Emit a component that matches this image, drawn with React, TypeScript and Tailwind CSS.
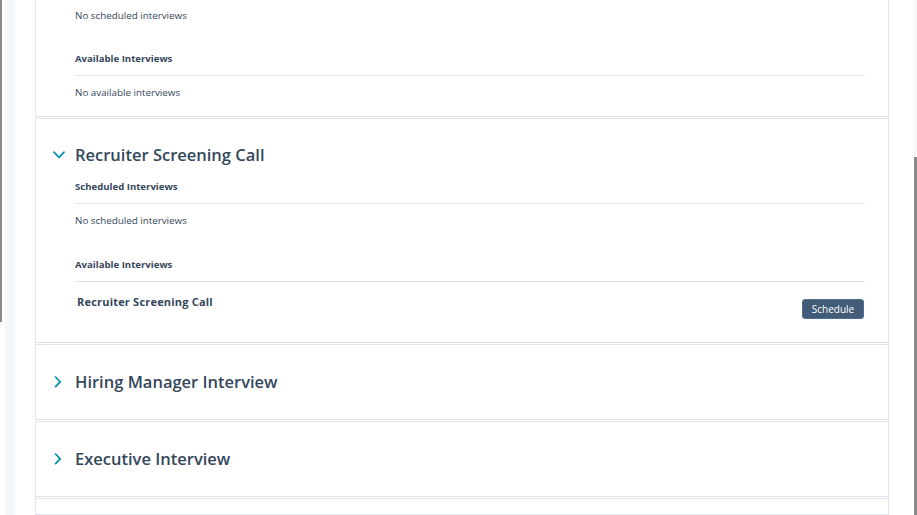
const FONT = "font-['Open_Sans','Lato',sans-serif]";

function Chevron({ open }: { open: boolean }) {
  return open ? (
    <svg width="12" height="8" viewBox="0 0 12 8" fill="none">
      <path d="M1 1.2 L6 6.3 L11 1.2" stroke="#0091ae" strokeWidth="1.7" strokeLinecap="round" strokeLinejoin="round" />
    </svg>
  ) : (
    <svg width="12" height="12" viewBox="0 0 12 12" fill="none">
      <path d="M2.6 1 L7.2 5.8 L2.6 10.6" stroke="#0091ae" strokeWidth="1.7" strokeLinecap="round" strokeLinejoin="round" />
    </svg>
  );
}

function SectionHeader({ label }: { label: string }) {
  return (
    <div className="border-b border-[#dfe3eb] pb-[9px] text-[9.6px] font-bold leading-[14px] text-[#33475b]">
      {label}
    </div>
  );
}

function EmptyText({ text, first = false }: { text: string; first?: boolean }) {
  return (
    <div className={`${first ? "pt-[11px]" : "pt-[10px]"} text-[9.8px] leading-[14px] text-[#33475b]`}>
      {text}
    </div>
  );
}

function CardTitle({ title, open }: { title: string; open: boolean }) {
  return (
    <div className="flex items-center gap-[10px] h-[24px] pl-[17px]">
      <Chevron open={open} />
      <h3 className="text-[16.5px] font-semibold text-[#33475b]">{title}</h3>
    </div>
  );
}

function CollapsedCard({ title }: { title: string }) {
  return (
    <div className="border border-[#dfe3eb] bg-white py-[25px]">
      <CardTitle title={title} open={false} />
    </div>
  );
}

export default function App() {
  return (
    <div className={`flex h-[515px] w-[917px] overflow-hidden bg-white ${FONT}`}>
      {/* left edge: neighbour scrollbar + sidebar strip */}
      <div className="flex flex-col w-[2px]">
        <div className="h-[322px] bg-[#8a8a8a]" />
      </div>
      <div className="w-[3px]" />
      <div className="w-[10px] bg-[#f5f8fa]" />

      <div className="flex-1 flex flex-col gap-[1px] pl-[20px] pr-[25px]">
        {/* first card, scrolled off the top */}
        <div className="-mt-[2px] border border-t-0 border-[#dfe3eb] bg-white pl-[39px] pr-[23px] pb-[16px]">
          <EmptyText text="No scheduled interviews" first />
          <div className="mt-[29px]">
            <SectionHeader label="Available Interviews" />
            <EmptyText text="No available interviews" />
          </div>
        </div>

        {/* expanded card */}
        <div className="border border-[#dfe3eb] bg-white pt-[24px] pb-[23px]">
          <CardTitle title="Recruiter Screening Call" open />
          <div className="pl-[39px] pr-[23px] mt-[13px]">
            <SectionHeader label="Scheduled Interviews" />
            <EmptyText text="No scheduled interviews" />
            <div className="mt-[30px]">
              <SectionHeader label="Available Interviews" />
            </div>
            <div className="flex items-start justify-between pl-[2px] pt-[12px]">
              <div className="text-[11px] font-bold leading-[16px] tracking-[0.2px] text-[#33475b]">
                Recruiter Screening Call
              </div>
              <button className="mt-[5px] mr-[1px] h-[20px] w-[62px] rounded-[3px] border border-[#516f90] bg-[#425b76] text-[10px] leading-none text-white">
                Schedule
              </button>
            </div>
          </div>
        </div>

        <CollapsedCard title="Hiring Manager Interview" />
        <CollapsedCard title="Executive Interview" />
        <div className="border border-[#dfe3eb] bg-white h-[40px]" />
      </div>

      {/* right scrollbar */}
      <div className="flex flex-col w-[3px]">
        <div className="h-[157px] bg-[#f8f8f8]" />
        <div className="flex-1 bg-[#8a8a8a]" />
      </div>
    </div>
  );
}
